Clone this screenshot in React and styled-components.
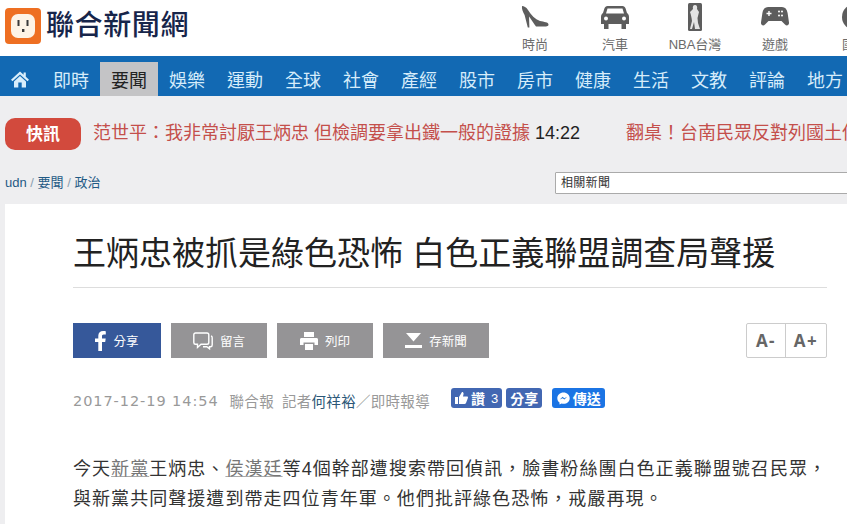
import React from "react";
import styled, { createGlobalStyle } from "styled-components";

const Global = createGlobalStyle`
  html, body { margin: 0; padding: 0; background: #eeeef0; }
  body { width: 847px; height: 524px; overflow: hidden; font-family: "Liberation Sans", "Noto Sans CJK TC", sans-serif; }
  a { text-decoration: none; color: inherit; }
`;

const Page = styled.div`
  width: 847px;
  height: 524px;
  overflow: hidden;
  display: flex;
  flex-direction: column;
`;

const TopBar = styled.header`
  height: 56px;
  background: #fff;
  display: flex;
  justify-content: space-between;
  flex: none;
  overflow: hidden;
`;

const Brand = styled.div`
  display: flex;
  align-items: center;
  gap: 5px;
  padding: 0 0 4px 5px;
`;

const BrandName = styled.div`
  font-size: 28px;
  line-height: 36px;
  font-weight: 500;
  color: #17254a;
  letter-spacing: 0.6px;
  white-space: nowrap;
`;

const Channels = styled.nav`
  display: flex;
  margin-right: -48px;
`;

const Channel = styled.div`
  width: 80px;
  display: flex;
  flex-direction: column;
  align-items: center;
  padding-top: 2px;
  font-size: 13px;
  line-height: 15px;
  color: #6a6a6a;
  white-space: nowrap;
`;

const ChannelIcon = styled.div`
  height: 30px;
  display: flex;
  align-items: center;
  justify-content: center;
  margin-bottom: 5px;
`;

const NavBar = styled.nav`
  height: 40px;
  flex: none;
  background: #1269b3;
  display: flex;
  align-items: flex-end;
  overflow: hidden;
  padding-left: 11px;
`;

const HomeItem = styled.div`
  width: 31px;
  height: 34px;
  display: flex;
  align-items: center;
  justify-content: flex-start;
  flex: none;
`;

const NavItem = styled.div`
  width: 58px;
  height: 34px;
  flex: none;
  display: flex;
  align-items: center;
  justify-content: center;
  font-size: 18px;
  white-space: nowrap;
  color: ${(p) => (p.$active ? "#222" : "#d6ecfa")};
  background: ${(p) => (p.$active ? "#c4c4c6" : "transparent")};
`;

const Ticker = styled.div`
  height: 76px;
  flex: none;
  display: flex;
  align-items: center;
  padding: 0 0 0 5px;
  overflow: hidden;
  white-space: nowrap;
`;

const FlashBadge = styled.div`
  width: 76px;
  height: 32px;
  box-sizing: border-box;
  padding-bottom: 3px;
  flex: none;
  border-radius: 10px;
  background: #d24a3d;
  color: #fff;
  font-size: 17px;
  font-weight: 700;
  display: flex;
  align-items: center;
  justify-content: center;
`;

const Headline = styled.span`
  font-size: 18px;
  line-height: 24px;
  padding-bottom: 3px;
  color: #c44f4b;
  margin-left: ${(p) => p.$gap}px;
`;

const HeadlineTime = styled.span`
  font-size: 18px;
  line-height: 24px;
  padding-bottom: 3px;
  color: #222;
  margin-left: 5px;
  flex: none;
`;

const CrumbRow = styled.div`
  height: 32px;
  flex: none;
  display: flex;
  align-items: flex-start;
  justify-content: space-between;
`;

const Crumbs = styled.div`
  font-size: 13px;
  line-height: 22px;
  padding: 0 0 0 5px;
  color: #8aa0b0;
  a { color: #1f5a85; }
`;

const CrumbRoot = styled.span`
  color: #1f5a85;
`;

const SearchBox = styled.div`
  width: 300px;
  height: 22px;
  margin-right: -8px;
  box-sizing: border-box;
  background: #fff;
  border: 1px solid #aaa;
  border-radius: 1px;
  font-size: 12px;
  line-height: 20px;
  color: #333;
  padding-left: 5px;
  letter-spacing: 0.3px;
`;

const Article = styled.main`
  flex: 1;
  margin-left: 5px;
  background: #fff;
  padding: 0 20px 0 68px;
  min-height: 0;
`;

const Title = styled.h1`
  margin: 0;
  padding: 30px 0 13px;
  font-size: 33px;
  line-height: 40px;
  font-weight: 400;
  color: #222;
  white-space: nowrap;
  border-bottom: 1px solid #ddd;
`;

const ActionRow = styled.div`
  display: flex;
  justify-content: space-between;
  align-items: flex-start;
  padding-top: 35px;
`;

const ActionGroup = styled.div`
  display: flex;
  gap: 10px;
`;

const ActionButton = styled.div`
  width: ${(p) => p.$w}px;
  height: 35px;
  background: ${(p) => p.$bg};
  color: #fff;
  font-size: 12.5px;
  display: flex;
  align-items: center;
  justify-content: center;
  gap: 7px;
`;

const FontSwitch = styled.div`
  display: flex;
  height: 35px;
  box-sizing: border-box;
  border: 1px solid #ccc;
  border-radius: 2px;
`;

const FontButton = styled.div`
  width: ${(p) => p.$w}px;
  display: flex;
  align-items: center;
  justify-content: center;
  font-size: 17px;
  font-weight: 700;
  letter-spacing: 1.5px;
  color: #666;
  font-family: "Open Sans", "Liberation Sans", sans-serif;
  & + & { border-left: 1px solid #ccc; }
`;

const MetaRow = styled.div`
  display: flex;
  align-items: center;
  height: 20px;
  margin-top: 30px;
  color: #999;
  white-space: nowrap;
`;

const MetaDate = styled.span`
  font-family: "DejaVu Sans", sans-serif;
  font-size: 14.5px;
  letter-spacing: 0.93px;
  margin-right: 11px;
  padding-top: 5px;
`;

const MetaText = styled.span`
  font-size: 14.5px;
  letter-spacing: 0.3px;
  padding-top: 5px;
  margin-right: ${(p) => p.$mr || 0}px;
  a { color: #2c5878; }
`;

const Social = styled.div`
  display: flex;
  height: 20px;
  margin-left: ${(p) => p.$ml || 0}px;
  padding: 0 ${(p) => p.$px ?? 4}px;
  align-items: center;
  gap: 3px;
  background: ${(p) => p.$bg};
  color: #fff;
  border-radius: 3px;
  font-size: 14px;
  font-weight: 700;
`;

const SocialCount = styled.span`
  font-weight: 400;
  font-size: 13px;
  margin-left: 3px;
`;

const Body = styled.p`
  margin: 46px 0 0;
  font-size: 18px;
  line-height: 30px;
  letter-spacing: 1.05px;
  color: #333;
  white-space: nowrap;
  a { color: #777; text-decoration: underline; text-decoration-color: #aaa; }
`;

const Plug = () => (
  <svg width="36" height="36" viewBox="0 0 36 36">
    <rect width="36" height="36" rx="4" fill="#ee6f22" />
    <rect x="6" y="6" width="24" height="24" rx="7" fill="#fdf3e6" />
    <rect x="12.5" y="12" width="2" height="6" fill="#3a3a3a" />
    <rect x="21.5" y="12" width="2" height="6" fill="#3a3a3a" />
    <rect x="17" y="21" width="2.4" height="3" fill="#3a3a3a" />
  </svg>
);

const Home = () => (
  <svg width="18" height="17" viewBox="0 0 18 17">
    <path d="M9 0.5 L0 8.8 L1.5 10.2 L9 3.4 L16.5 10.2 L18 8.8 L14.8 5.8 V1.5 H12.6 V3.8 Z" fill="#d9eefb" />
    <path d="M9 5 L3 10.4 V16.5 H7.3 V11.6 H10.7 V16.5 H15 V10.4 Z" fill="#d9eefb" />
  </svg>
);

const Shoe = () => (
  <svg width="28" height="22" viewBox="0 0 28 22">
    <path d="M1 0 C3 0 5 1 7 4 C10 9 14 13 19 15 C23 16 27.5 16 27.5 18.5 C27.5 20.5 25 20.5 22 20.5 L15 20.5 C13 18 10 13 8 10.5 L8.4 21.5 L6.8 21.5 L3.6 9 C2 6 0.5 3 1 0 Z" fill="#5d5d5d" />
  </svg>
);

const Car = () => (
  <svg width="28" height="23" viewBox="0 0 28 23">
    <path d="M6.5 0 H21.5 C23 0 24 1 24.6 2.5 L26 7 C27.4 8 28 9 28 11 V18 H25 V23 H20.5 V18 H7.5 V23 H3 V18 H0 V11 C0 9 .6 8 2 7 L3.4 2.5 C4 1 5 0 6.5 0 Z M6.5 2.6 L5 7.4 H23 L21.5 2.6 Z" fill="#5d5d5d" fillRule="evenodd" />
    <circle cx="5" cy="12.5" r="2" fill="#fff" />
    <circle cx="23" cy="12.5" r="2" fill="#fff" />
  </svg>
);

const Nba = () => (
  <svg width="14" height="28" viewBox="0 0 14 28">
    <rect width="14" height="28" rx="1.5" fill="#5d5d5d" />
    <path d="M7 2 C9 2 9.5 4 9 6 L11 9 L9.5 15 L10 20 L12 26 H7 L6 19 L4 26 H2 L4 18 C3.5 14 3 12 2 9 L5 6 C4.5 4 5 2 7 2 Z" fill="#e4e4e4" />
  </svg>
);

const Pad = () => (
  <svg width="28" height="20" viewBox="0 0 28 20">
    <path d="M7 0 H21 C24 0 26 2 26.6 6 L28 15.5 C28.3 18.5 25.5 19.5 24 17.5 L20.5 14 H7.5 L4 17.5 C2.5 19.5 -.3 18.5 0 15.5 L1.4 6 C2 2 4 0 7 0 Z" fill="#5d5d5d" />
    <path d="M8 4 V9 M5.5 6.5 H10.5" stroke="#fff" strokeWidth="1.4" />
    <g fill="#fff"><circle cx="18" cy="4.5" r="1" /><circle cx="18" cy="8.5" r="1" /><circle cx="21" cy="4.5" r="1" /><circle cx="21" cy="8.5" r="1" /></g>
  </svg>
);

const Globe = () => (
  <svg width="26" height="26" viewBox="0 0 26 26">
    <circle cx="13" cy="13" r="13" fill="#5d5d5d" />
  </svg>
);

const Fb = () => (
  <svg width="11" height="20" viewBox="0 0 11 20">
    <path d="M7 20 V11 H10.2 L10.7 7.4 H7 V5.2 C7 4.1 7.4 3.4 8.8 3.4 H10.8 V.2 C10.4 .1 9.3 0 8.1 0 C5.3 0 3.3 1.7 3.3 4.8 V7.4 H0 V11 H3.3 V20 Z" fill="#fff" />
  </svg>
);

const Bubble = () => (
  <svg width="20" height="18" viewBox="0 0 20 18" fill="none" stroke="#fff" strokeWidth="1.4">
    <path d="M2.5 1 H14 C15 1 15.8 1.8 15.8 2.8 V10.5 C15.8 11.5 15 12.3 14 12.3 H8 L4.5 15.5 V12.3 H2.5 C1.5 12.3 .8 11.5 .8 10.5 V2.8 C.8 1.8 1.5 1 2.5 1 Z" />
    <path d="M18 4 C18.8 4.2 19.2 5 19.2 5.8 V13 C19.2 14 18.5 14.8 17.5 14.8 H16.5 V16.8 L13.8 14.8 H10" />
  </svg>
);

const Printer = () => (
  <svg width="18" height="18" viewBox="0 0 18 18">
    <path d="M4 0 H14 V5 H4 Z M1.5 6 H16.5 C17.4 6 18 6.6 18 7.5 V13 H14.5 V10.5 H3.5 V13 H0 V7.5 C0 6.6 .6 6 1.5 6 Z M5 12 H13 V18 H5 Z" fill="#fff" />
  </svg>
);

const SaveIcon = () => (
  <svg width="17" height="15" viewBox="0 0 17 15">
    <path d="M1 0 H16 L8.5 8.5 Z M0 12 H17 V15 H0 Z" fill="#fff" />
  </svg>
);

const Thumb = () => (
  <svg width="13" height="12" viewBox="0 0 13 12">
    <path d="M0 5 H3 V12 H0 Z M4 5 L7 0 C8.3 0 8.8 1 8.5 2.2 L8 4.5 H12 C13 4.5 13.2 5.5 12.8 6.2 L11 11 C10.7 11.7 10.2 12 9.5 12 H4 Z" fill="#fff" />
  </svg>
);

const Messenger = () => (
  <svg width="13" height="13" viewBox="0 0 13 13">
    <path d="M6.5 .5 C3 .5 .3 3 .3 6.2 C.3 8 1.1 9.5 2.5 10.5 V12.6 L4.6 11.5 C5.2 11.7 5.8 11.8 6.5 11.8 C10 11.8 12.7 9.3 12.7 6.2 C12.7 3 10 .5 6.5 .5 Z" fill="#fff" />
    <path d="M2.8 7.6 L5.6 4.8 L7.3 6.2 L10.2 4.8 L7.4 7.6 L5.7 6.2 Z" fill="#1b74d8" />
  </svg>
);

const navItems = ["即時", "要聞", "娛樂", "運動", "全球", "社會", "產經", "股市", "房市", "健康", "生活", "文教", "評論", "地方"];

const channels = [
  { label: "時尚", icon: <Shoe /> },
  { label: "汽車", icon: <Car /> },
  { label: "NBA台灣", icon: <Nba /> },
  { label: "遊戲", icon: <Pad /> },
  { label: "國際", icon: <Globe /> },
];

export default function App() {
  return (
    <Page>
      <Global />
      <TopBar>
        <Brand>
          <Plug />
          <BrandName>聯合新聞網</BrandName>
        </Brand>
        <Channels>
          {channels.map((c) => (
            <Channel key={c.label}>
              <ChannelIcon>{c.icon}</ChannelIcon>
              {c.label}
            </Channel>
          ))}
        </Channels>
      </TopBar>
      <NavBar>
        <HomeItem><Home /></HomeItem>
        {navItems.map((n) => (
          <NavItem key={n} $active={n === "要聞"}>{n}</NavItem>
        ))}
      </NavBar>
      <Ticker>
        <FlashBadge>快訊</FlashBadge>
        <Headline $gap={12}>范世平：我非常討厭王炳忠 但檢調要拿出鐵一般的證據</Headline>
        <HeadlineTime>14:22</HeadlineTime>
        <Headline $gap={46}>翻桌！台南民眾反對列國土保育</Headline>
      </Ticker>
      <CrumbRow>
        <Crumbs><CrumbRoot>udn</CrumbRoot> / <a>要聞</a> / <a>政治</a></Crumbs>
        <SearchBox>相關新聞</SearchBox>
      </CrumbRow>
      <Article>
        <Title>王炳忠被抓是綠色恐怖 白色正義聯盟調查局聲援</Title>
        <ActionRow>
          <ActionGroup>
            <ActionButton $w={88} $bg="#36589a"><Fb />分享</ActionButton>
            <ActionButton $w={96} $bg="#959496"><Bubble />留言</ActionButton>
            <ActionButton $w={96} $bg="#959496"><Printer />列印</ActionButton>
            <ActionButton $w={106} $bg="#959496"><SaveIcon />存新聞</ActionButton>
          </ActionGroup>
          <FontSwitch>
            <FontButton $w={38}>A-</FontButton>
            <FontButton $w={40}>A+</FontButton>
          </FontSwitch>
        </ActionRow>
        <MetaRow>
          <MetaDate>2017-12-19 14:54</MetaDate>
          <MetaText $mr={8}>聯合報</MetaText>
          <MetaText>記者<a>何祥裕</a>／即時報導</MetaText>
          <Social $bg="#4267b2" $ml={21}><Thumb />讚<SocialCount>3</SocialCount></Social>
          <Social $bg="#4267b2" $ml={4}>分享</Social>
          <Social $bg="#1b74e4" $ml={10} $px={4.5}><Messenger />傳送</Social>
        </MetaRow>
        <Body>
          今天<a>新黨</a>王炳忠、<a>侯漢廷</a>等4個幹部遭搜索帶回偵訊，臉書粉絲團白色正義聯盟號召民眾，<br />
          與新黨共同聲援遭到帶走四位青年軍。他們批評綠色恐怖，戒嚴再現。
        </Body>
      </Article>
    </Page>
  );
}
